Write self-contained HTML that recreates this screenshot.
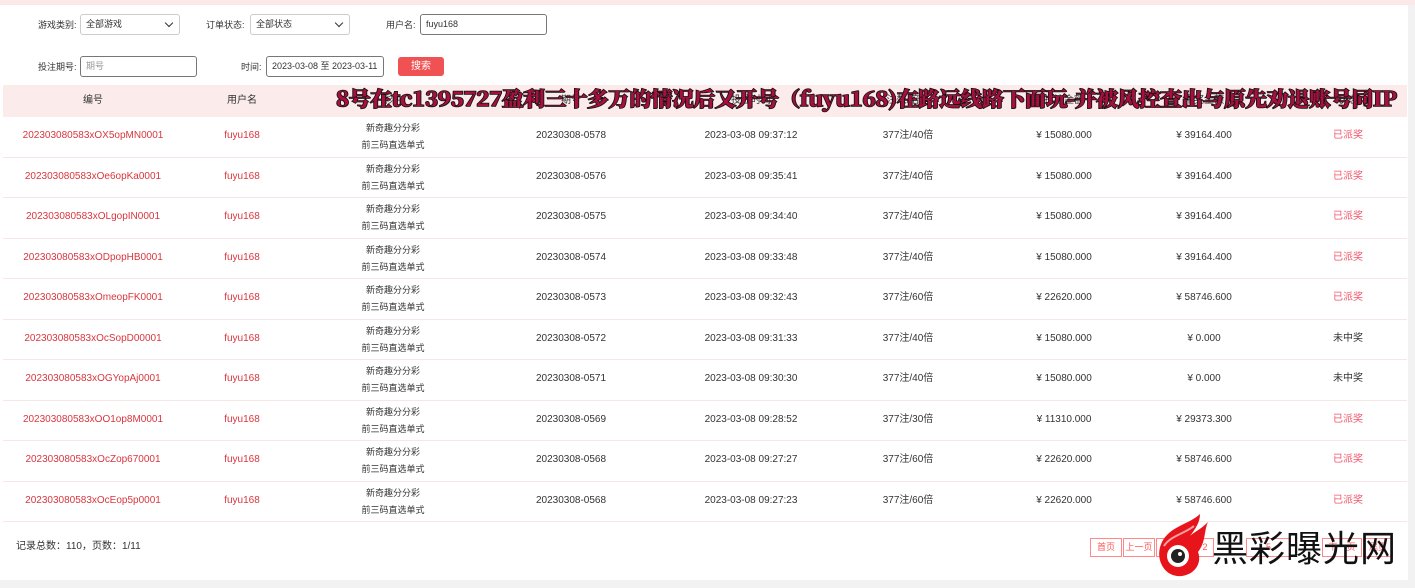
<!DOCTYPE html>
<html><head><meta charset="utf-8"><style>
*{margin:0;padding:0;box-sizing:border-box}
body{width:1415px;height:588px;background:#f2f2f2;font-family:"Liberation Sans","Noto Sans CJK SC",sans-serif;font-size:10px;color:#333;position:relative;overflow:hidden}
.panel{position:absolute;left:0;top:5px;width:1408px;height:575px;background:#fff}
.top{position:absolute;left:0;top:0;width:1415px;height:5px;background:#fbe9ea}
.lbl{position:absolute;font-size:9px;color:#333;line-height:12px}
.sel,.inp{position:absolute;height:21px;border:1px solid #ccc;border-radius:3px;background:#fff;font-size:9px;padding-left:5px;line-height:19px;color:#333}
.inp{border-color:#777}
.sel:after{content:"";position:absolute;right:7px;top:5px;width:5px;height:5px;border-right:1.5px solid #333;border-bottom:1.5px solid #333;transform:rotate(45deg)}
.btn{position:absolute;left:398px;top:57px;width:46px;height:19px;background:#f05253;border-radius:3px;color:#fff;font-size:10px;text-align:center;line-height:19px}
.hdr{position:absolute;left:3px;top:85px;width:1404px;height:32px;background:#fcebeb}
.c{position:absolute;text-align:center;transform:translateX(-50%);white-space:nowrap;line-height:12px;height:12px}
.row{position:absolute;left:3px;width:1404px;height:40.5px;border-bottom:1px solid #f6e6e6}
.red{color:#d9363e}
.pink{color:#f2556a}
.title{position:absolute;left:336px;top:84px;font-family:"Noto Serif CJK SC","Liberation Serif",serif;font-weight:900;font-size:20px;line-height:28px;color:#a5103f;-webkit-text-stroke:1.6px #111;paint-order:stroke fill;white-space:nowrap;transform-origin:0 0;transform:scaleX(1.08);letter-spacing:-0.3px}
.pg{position:absolute;top:538px;height:19px;border:1px solid #f88;color:#f55;font-size:9px;line-height:17px;text-align:center}
</style></head><body>
<div class="top"></div>
<div class="panel"></div>
<div class="lbl" style="left:38px;top:19px">游戏类别:</div>
<div class="sel" style="left:80px;top:14px;width:100px">全部游戏</div>
<div class="lbl" style="left:206px;top:19px">订单状态:</div>
<div class="sel" style="left:250px;top:14px;width:100px">全部状态</div>
<div class="lbl" style="left:386px;top:19px">用户名:</div>
<div class="inp" style="left:420px;top:14px;width:127px">fuyu168</div>
<div class="lbl" style="left:38px;top:61px">投注期号:</div>
<div class="inp" style="left:80px;top:56px;width:117px;color:#999">期号</div>
<div class="lbl" style="left:241px;top:61px">时间:</div>
<div class="inp" style="left:266px;top:56px;width:118px">2023-03-08 至 2023-03-11</div>
<div class="btn">搜索</div>
<div class="hdr"></div>
<div class="c" style="left:93px;top:95px">编号</div>
<div class="c" style="left:242px;top:95px">用户名</div>
<div class="c" style="left:393px;top:95px">彩种</div>
<div class="c" style="left:571px;top:95px">期号</div>
<div class="c" style="left:751px;top:95px">投注时间</div>
<div class="c" style="left:908px;top:95px">注数/倍数</div>
<div class="c" style="left:1064px;top:95px">投注金额</div>
<div class="c" style="left:1204px;top:95px">中奖金额</div>
<div class="c" style="left:1348px;top:95px">状态</div>
<div id="rows"></div>
<div class="title">8号在tc1395727盈利三十多万的情况后又开号（fuyu168)在路远线路下面玩-并被风控查出与原先劝退账号同IP</div>
<div style="position:absolute;left:16px;top:541px;font-size:10px;line-height:12px">记录总数：110，页数：1/11</div>
<div class="pg" style="left:1090px;width:32px">首页</div>
<div class="pg" style="left:1123px;width:32px">上一页</div>
<div class="pg" style="left:1156px;width:40px">1</div>
<div class="pg" style="left:1196px;width:18px">2</div>
<div class="pg" style="left:1246px;width:45px">5</div>
<div class="pg" style="left:1322px;width:40px">下一页</div>
<div class="pg" style="left:1363px;width:30px">尾页</div>
<svg style="position:absolute;left:1150px;top:512px" width="60" height="68" viewBox="0 0 60 68">
<path d="M50 2 C40 12 20 14 12 30 C4 46 14 66 32 64 C46 62 52 50 48 40 C56 30 54 18 58 10 C50 18 44 20 40 24 C46 16 50 10 50 2Z" fill="#e8141c"/>
<path d="M44 14 C34 22 20 24 14 34" stroke="#fff" stroke-width="2" fill="none" opacity=".6"/>
<circle cx="28" cy="44" r="11" fill="#fff"/><circle cx="28" cy="44" r="7" fill="#222"/><circle cx="30" cy="42" r="2" fill="#fff"/>
</svg>
<div style="position:absolute;left:1212px;top:526px;font-size:36px;font-family:'Noto Sans CJK SC',sans-serif;color:#111;letter-spacing:1px;line-height:40px">黑彩曝光网</div>
<script>
var d=[["202303080583xOX5opMN0001","20230308-0578","09:37:12","40","15080.000","39164.400",1],
["202303080583xOe6opKa0001","20230308-0576","09:35:41","40","15080.000","39164.400",1],
["202303080583xOLgopIN0001","20230308-0575","09:34:40","40","15080.000","39164.400",1],
["202303080583xODpopHB0001","20230308-0574","09:33:48","40","15080.000","39164.400",1],
["202303080583xOmeopFK0001","20230308-0573","09:32:43","60","22620.000","58746.600",1],
["202303080583xOcSopD00001","20230308-0572","09:31:33","40","15080.000","0.000",0],
["202303080583xOGYopAj0001","20230308-0571","09:30:30","40","15080.000","0.000",0],
["202303080583xOO1op8M0001","20230308-0569","09:28:52","30","11310.000","29373.300",1],
["202303080583xOcZop670001","20230308-0568","09:27:27","60","22620.000","58746.600",1],
["202303080583xOcEop5p0001","20230308-0568","09:27:23","60","22620.000","58746.600",1]];
var h="";d.forEach(function(r,i){var y=117+i*40.5,m=y+13;
h+='<div class="row" style="top:'+y+'px"></div>'+
'<div class="c red" style="left:93px;top:'+m+'px">'+r[0]+'</div>'+
'<div class="c red" style="left:242px;top:'+m+'px">fuyu168</div>'+
'<div class="c" style="left:393px;top:'+(y+3)+'px;font-size:9px;line-height:17px;height:34px">新奇趣分分彩<br>前三码直选单式</div>'+
'<div class="c" style="left:571px;top:'+m+'px">'+r[1]+'</div>'+
'<div class="c" style="left:751px;top:'+m+'px">2023-03-08 '+r[2]+'</div>'+
'<div class="c" style="left:908px;top:'+m+'px">377注/'+r[3]+'倍</div>'+
'<div class="c" style="left:1064px;top:'+m+'px">¥ '+r[4]+'</div>'+
'<div class="c" style="left:1204px;top:'+m+'px">¥ '+r[5]+'</div>'+
'<div class="c '+(r[6]?'pink':'')+'" style="left:1348px;top:'+m+'px">'+(r[6]?'已派奖':'未中奖')+'</div>';});
document.getElementById("rows").innerHTML=h;
</script>
</body></html>
